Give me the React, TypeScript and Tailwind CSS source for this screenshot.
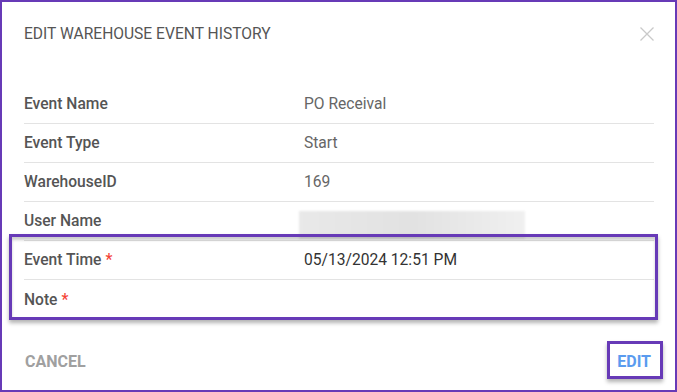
import React from 'react';

const rows = [
  { label: 'Event Name', value: 'PO Receival' },
  { label: 'Event Type', value: 'Start' },
  { label: 'WarehouseID', value: '169' },
  { label: 'User Name', value: null },
  { label: 'Event Time', value: '05/13/2024 12:51 PM', required: true },
  { label: 'Note', value: '', required: true },
];

const App = () => {
  return (
    <div
      className="relative w-[677px] h-[392px] bg-white border-2 border-[#673ab7] overflow-hidden"
      style={{ fontFamily: 'Roboto, "Liberation Sans", sans-serif' }}
    >
      {/* header */}
      <div className="flex justify-between pl-[22px] pr-[21px] pt-[21px] h-[83px] items-start">
        <h2 className="text-[15.6px] leading-[22px] text-[#555]">EDIT WAREHOUSE EVENT HISTORY</h2>
        <svg width="14" height="14" viewBox="0 0 14 14" className="mt-[4px]">
          <path d="M0.5 0.5 L13.5 13.5 M13.5 0.5 L0.5 13.5" stroke="#c9c9c9" strokeWidth="1.3" />
        </svg>
      </div>

      {/* rows */}
      <div className="pl-[22px] pr-[21px]">
        {rows.map((r, i) => (
          <div
            key={r.label}
            className={`flex items-center h-[39px] pt-[2px] ${i < rows.length - 1 ? 'border-b border-[#e3e3e3]' : ''}`}
          >
            <div className="w-[280px] text-[15.6px] font-medium text-[#555]">
              {r.label}
              {r.required && <span className="text-[#f44336] ml-[4px]">*</span>}
            </div>
            {r.value === null ? (
              <div className="-ml-[5px] mt-[5px] w-[226px] h-[28px] bg-gradient-to-r from-[#e9e9e9] via-[#e2e2e2] to-[#f0f0f0] blur-[1px]" />
            ) : (
              <div className={`text-[15.6px] ${r.required ? 'text-[#333]' : 'text-[#666]'}`}>{r.value}</div>
            )}
          </div>
        ))}
      </div>

      {/* footer */}
      <div className="flex items-center justify-between pl-[23px] pr-[24px] mt-[21px] h-[44px]">
        <button className="text-[16px] font-bold text-[#a0a0a0]">CANCEL</button>
        <button className="text-[16px] font-bold text-[#5a9bef]">EDIT</button>
      </div>

      {/* highlight annotations */}
      <div className="absolute left-[7px] top-[232px] w-[649px] h-[86px] border-[3px] border-[#673ab7] shadow-[0_3px_4px_rgba(0,0,0,0.3),inset_0_3px_3px_rgba(0,0,0,0.2)] pointer-events-none" />
      <div className="absolute left-[605px] top-[339px] w-[56px] h-[38px] border-[3px] border-[#673ab7] shadow-[0_3px_4px_rgba(0,0,0,0.3)] pointer-events-none" />
    </div>
  );
};

export default App;
